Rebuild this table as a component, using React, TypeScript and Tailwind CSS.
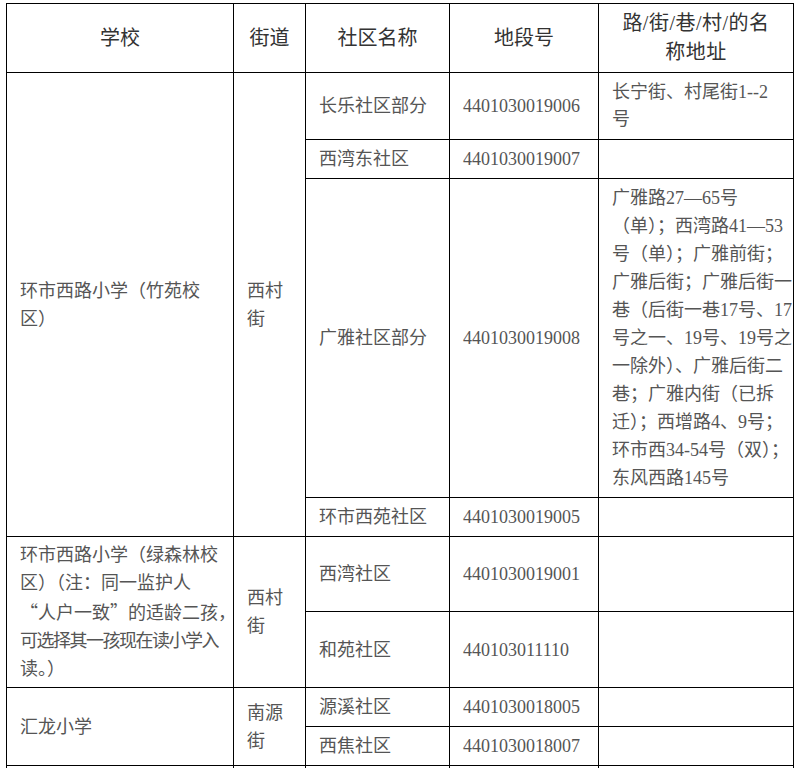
const font = "font-['Liberation_Serif','Noto_Sans_CJK_SC',serif]";
const td = "border border-black align-middle pl-[13px] pr-1 py-0 text-left text-[18px] leading-[28px] text-[#555] font-normal";
const th = "border border-black align-middle px-1 py-0 text-center text-[20px] leading-[29px] text-[#333] font-normal";
const cjk = "font-['Noto_Sans_CJK_SC',sans-serif]";

function Lines({ lines, className = "" }: { lines: string[]; className?: string }) {
  return (
    <div className={`whitespace-nowrap ${className}`}>
      {lines.map((l, i) => (
        <div key={i}>{l}</div>
      ))}
    </div>
  );
}

export default function App() {
  return (
    <div className={`bg-white min-h-[768px] pl-[6px] pt-[3px] ${font}`}>
      <table className="table-fixed border-collapse w-[787px]">
        <colgroup>
          <col className="w-[227px]" />
          <col className="w-[72px]" />
          <col className="w-[144px]" />
          <col className="w-[149px]" />
          <col className="w-[195px]" />
        </colgroup>
        <thead>
          <tr className="h-[69px]">
            <th className={th}>学校</th>
            <th className={th}>街道</th>
            <th className={th}>社区名称</th>
            <th className={th}>地段号</th>
            <th className={th}>
              <Lines lines={["路/街/巷/村/的名", "称地址"]} className="tracking-[0.5px]" />
            </th>
          </tr>
        </thead>
        <tbody>
          {/* 竹苑校区 */}
          <tr className="h-[67px]">
            <td className={td} rowSpan={4}>
              <Lines lines={["环市西路小学（竹苑校", "区）"]} />
            </td>
            <td className={td} rowSpan={4}>
              <Lines lines={["西村", "街"]} />
            </td>
            <td className={td}>长乐社区部分</td>
            <td className={td}>4401030019006</td>
            <td className={td}>
              <Lines lines={["长宁街、村尾街1--2", "号"]} className="leading-[27px]" />
            </td>
          </tr>
          <tr className="h-[39px]">
            <td className={td}>西湾东社区</td>
            <td className={td}>4401030019007</td>
            <td className={td}></td>
          </tr>
          <tr className="h-[319px]">
            <td className={td}>广雅社区部分</td>
            <td className={td}>4401030019008</td>
            <td className={`${td} text-[17px]`}>
              <Lines
                lines={[
                  "广雅路27—65号",
                  "（单）；西湾路41—53",
                  "号（单）；广雅前街；",
                  "广雅后街；广雅后街一",
                  "巷（后街一巷17号、17",
                  "号之一、19号、19号之",
                  "一除外）、广雅后街二",
                  "巷；广雅内街（已拆",
                  "迁）；西增路4、9号；",
                  "环市西34-54号（双）；",
                  "东风西路145号",
                ]}
              />
            </td>
          </tr>
          <tr className="h-[39px]">
            <td className={td}>环市西苑社区</td>
            <td className={td}>4401030019005</td>
            <td className={td}></td>
          </tr>

          {/* 绿森林校区 */}
          <tr className="h-[75px]">
            <td className={td} rowSpan={2}>
              <Lines lines={["环市西路小学（绿森林校", "区）（注：同一监护人"]} />
              <div className="whitespace-nowrap">
                <span className={cjk}>“</span>人户一致<span className={cjk}>”</span>的适龄二孩，
              </div>
              <div className="whitespace-nowrap tracking-[-1.5px]">可选择其一孩现在读小学入</div>
              <div>读。）</div>
            </td>
            <td className={td} rowSpan={2}>
              <Lines lines={["西村", "街"]} />
            </td>
            <td className={td}>西湾社区</td>
            <td className={td}>4401030019001</td>
            <td className={td}></td>
          </tr>
          <tr className="h-[76px]">
            <td className={td}>和苑社区</td>
            <td className={td}>440103011110</td>
            <td className={td}></td>
          </tr>

          {/* 汇龙小学 */}
          <tr className="h-[39px]">
            <td className={td} rowSpan={2}>汇龙小学</td>
            <td className={td} rowSpan={2}>
              <Lines lines={["南源", "街"]} />
            </td>
            <td className={td}>源溪社区</td>
            <td className={td}>4401030018005</td>
            <td className={td}></td>
          </tr>
          <tr className="h-[39px]">
            <td className={td}>西焦社区</td>
            <td className={td}>4401030018007</td>
            <td className={td}></td>
          </tr>
          <tr className="h-[40px]">
            <td className={td}></td>
            <td className={td}></td>
            <td className={td}></td>
            <td className={td}></td>
            <td className={td}></td>
          </tr>
        </tbody>
      </table>
    </div>
  );
}
